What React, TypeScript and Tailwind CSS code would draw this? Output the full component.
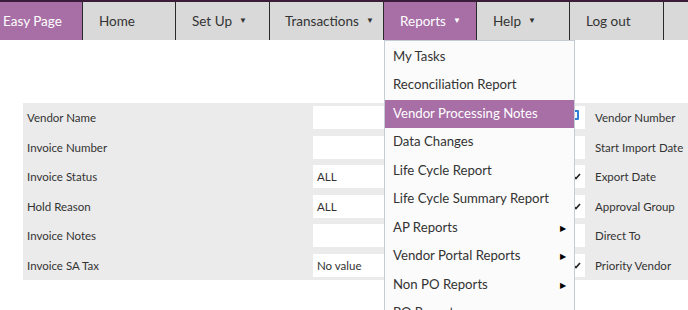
import React from "react";

const font = { fontFamily: '"Segoe UI", Lato, "Noto Sans", sans-serif' };

function Caret() {
  return <span className="ml-[7px] text-[8px] relative top-[-1px]">▼</span>;
}

const navItems: { label: string; w: string; caret?: boolean; active?: boolean; pl?: string }[] = [
  { label: "Easy Page", w: "w-[83px]", active: true, pl: "pl-[3px]" },
  { label: "Home", w: "w-[93px]" },
  { label: "Set Up", w: "w-[94px]", caret: true },
  { label: "Transactions", w: "w-[114px]", caret: true, pl: "pl-[15px]" },
  { label: "Reports", w: "w-[93px]", caret: true, active: true },
  { label: "Help", w: "w-[93px]", caret: true },
  { label: "Log out", w: "w-[94px]" },
  { label: "", w: "w-[40px]" },
];

const leftRows: { label: string; kind: "text" | "select" | "search"; value?: string }[] = [
  { label: "Vendor Name", kind: "search" },
  { label: "Invoice Number", kind: "text" },
  { label: "Invoice Status", kind: "select", value: "ALL" },
  { label: "Hold Reason", kind: "select", value: "ALL" },
  { label: "Invoice Notes", kind: "text" },
  { label: "Invoice SA Tax", kind: "select", value: "No value" },
];

const rightLabels = [
  "Vendor Number",
  "Start Import Date",
  "Export Date",
  "Approval Group",
  "Direct To",
  "Priority Vendor",
];

const menuItems: { label: string; sub?: boolean; active?: boolean }[] = [
  { label: "My Tasks" },
  { label: "Reconciliation Report" },
  { label: "Vendor Processing Notes", active: true },
  { label: "Data Changes" },
  { label: "Life Cycle Report" },
  { label: "Life Cycle Summary Report" },
  { label: "AP Reports", sub: true },
  { label: "Vendor Portal Reports", sub: true },
  { label: "Non PO Reports", sub: true },
  { label: "PO Reports", sub: true },
];

function Chevron() {
  return (
    <svg width="8" height="7" viewBox="0 0 8 7" className="absolute right-[4px] top-[8px]">
      <path d="M1 3.5 L3 5.5 L7 1" stroke="#222" strokeWidth="1.6" fill="none" />
    </svg>
  );
}

export default function App() {
  return (
    <div className="relative w-[688px] h-[310px] overflow-hidden bg-white text-[#333]" style={font}>
      {/* Nav */}
      <div className="flex h-[40px] border-t-[2px] border-[#3a1b3a] bg-[#d9d9d9] whitespace-nowrap">
        {navItems.map((n, i) => (
          <div
            key={i}
            className={`${n.w} shrink-0 h-full flex items-center text-[13.5px] border-r border-[#2a2a2a] ${
              n.pl ?? "pl-[16px]"
            } ${n.active ? "bg-[#a86ea6] text-white" : "text-[#333]"}`}
          >
            {n.label}
            {n.caret && <Caret />}
          </div>
        ))}
      </div>

      {/* Form panel */}
      <div className="mt-[63px] ml-[23px] bg-[#ebebeb] flex">
        <div className="flex flex-col w-[562px] shrink-0">
          {leftRows.map((r, i) => (
            <div key={i} className="h-[29.5px] flex items-center">
              <div className="w-[290px] pl-[4px] text-[11.5px] text-[#333]">{r.label}</div>
              <div className="relative w-[272px] h-[23px] bg-white text-[11.5px] text-[#333] pl-[4px] flex items-center">
                {r.value}
                {r.kind === "select" && <Chevron />}
                {r.kind === "search" && (
                  <div className="absolute right-[6px] top-[4px] w-[6px] h-[10px] border-2 border-[#2e7fd6] rounded-[1px]" />
                )}
              </div>
            </div>
          ))}
        </div>
        <div className="flex flex-col pl-[10px] flex-1">
          {rightLabels.map((l, i) => (
            <div key={i} className="h-[29.5px] flex items-center text-[11.5px] text-[#333] whitespace-nowrap">
              {l}
            </div>
          ))}
        </div>
      </div>

      {/* Dropdown menu */}
      <div className="absolute left-[384px] top-[40px] w-[191px] pt-[1.5px] bg-[#fbfbfb] border border-[#c5ccd3] whitespace-nowrap">
        {menuItems.map((m, i) => (
          <div
            key={i}
            className={`relative h-[28.5px] flex items-center pl-[8px] text-[13.2px] ${
              m.active ? "bg-[#a86ea6] text-white" : "text-[#333]"
            }`}
          >
            {m.label}
            {m.sub && (
              <span className="absolute right-[8px] top-[8px] text-[8px] text-black">▶</span>
            )}
          </div>
        ))}
      </div>
    </div>
  );
}
